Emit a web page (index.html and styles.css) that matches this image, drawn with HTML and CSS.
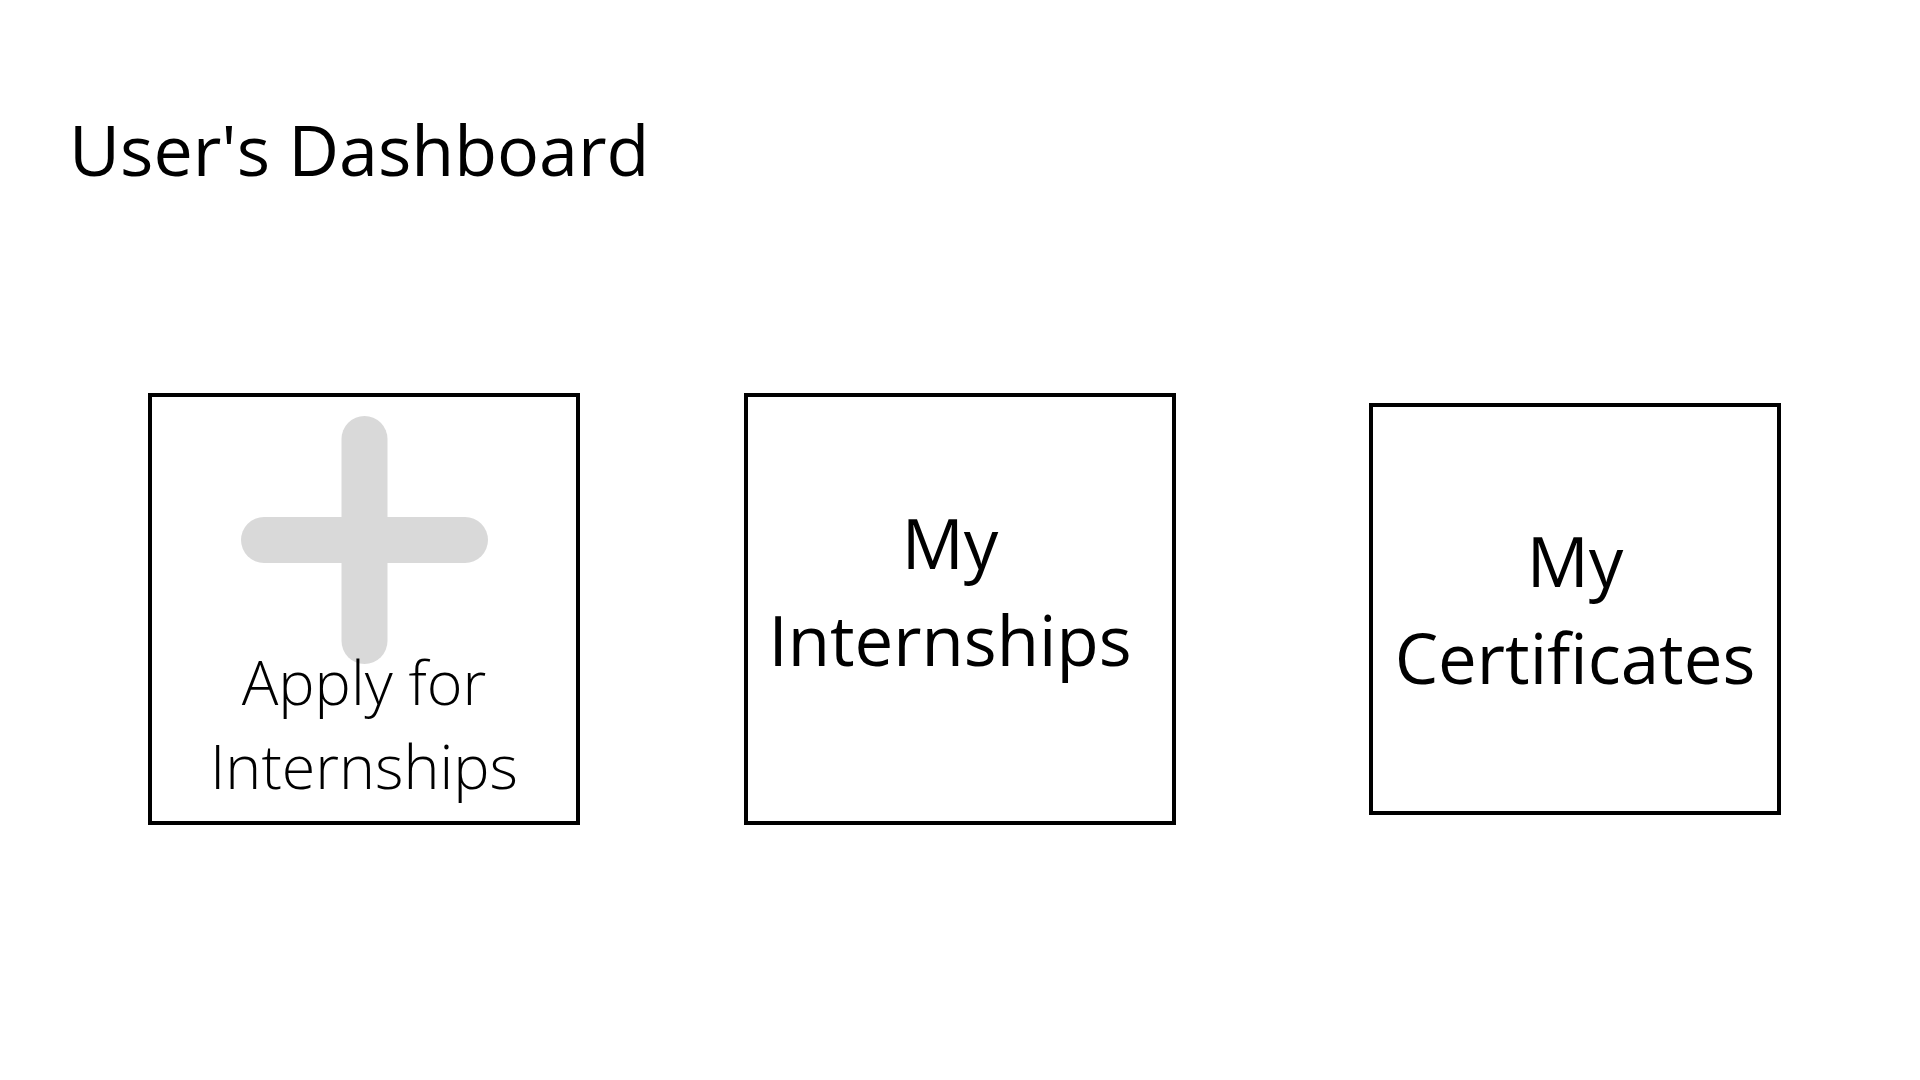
FILE: index.html
```html
<!DOCTYPE html>
<html lang="en">
<head>
<meta charset="utf-8">
<title>User's Dashboard</title>
<link rel="stylesheet" href="styles.css">
</head>
<body>
<h1 class="title">User's Dashboard</h1>
<div class="cards">
  <a class="card card-apply" href="#">
    <svg class="plus" width="247" height="248" viewBox="0 0 247 248" aria-hidden="true">
      <line x1="123.5" y1="23" x2="123.5" y2="225" stroke="#d9d9d9" stroke-width="46" stroke-linecap="round"/>
      <line x1="23" y1="124" x2="224" y2="124" stroke="#d9d9d9" stroke-width="46" stroke-linecap="round"/>
    </svg>
    <span class="card-label light">Apply for<br>Internships</span>
  </a>
  <a class="card card-intern" href="#">
    <span class="card-label">My<br>Internships</span>
  </a>
  <a class="card card-cert" href="#">
    <span class="card-label">My<br>Certificates</span>
  </a>
</div>
</body>
</html>
```
FILE: styles.css
```css
html, body {
  margin: 0;
  padding: 0;
  background: #ffffff;
}
body {
  width: 1920px;
  height: 1080px;
  overflow: hidden;
  font-family: "Open Sans", "Noto Sans", sans-serif;
  color: #000;
}
.title {
  margin: 0;
  padding: 101px 0 0 69px;
  font-size: 70px;
  font-weight: 400;
  line-height: normal;
}
.cards {
  display: flex;
  align-items: center;
  margin-top: 196px;
  padding-left: 148px;
}
.card {
  box-sizing: border-box;
  border: 4px solid #000;
  display: flex;
  flex-direction: column;
  align-items: center;
  justify-content: center;
  text-decoration: none;
  color: #000;
  position: relative;
}
.card-apply {
  width: 432px;
  height: 432px;
  justify-content: flex-end;
  padding-bottom: 13px;
}
.card-intern {
  width: 432px;
  height: 432px;
  margin-left: 164px;
  padding-right: 20px;
  padding-bottom: 36px;
}
.card-cert {
  width: 412px;
  height: 412px;
  margin-left: 193px;
}
.plus {
  position: absolute;
  left: 89px;
  top: 19px;
}
.card-label {
  position: relative;
  text-align: center;
  font-size: 69px;
  line-height: 97px;
  font-weight: 400;
}
.card-label.light {
  font-weight: 300;
  font-size: 61px;
  line-height: 84px;
}
```
